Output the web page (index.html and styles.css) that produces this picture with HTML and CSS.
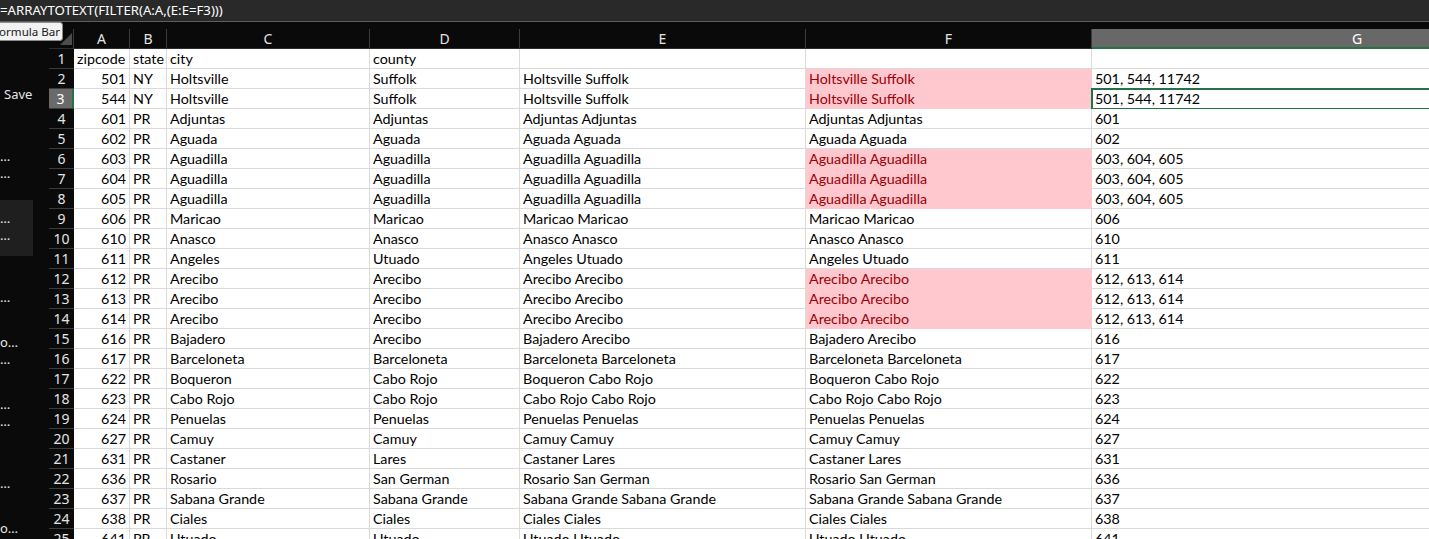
FILE: index.html
```html
<!DOCTYPE html>
<html lang="en">
<head>
    <meta charset="UTF-8">
    <title>Book1 - Excel</title>
    <link rel="stylesheet" href="styles.css">
</head>
<body>
    <div class="formula-bar">=ARRAYTOTEXT(FILTER(A:A,(E:E=F3)))</div>
    <div class="tip">Formula Bar</div>

    <div class="main">
        <!-- backstage list, cut off at the left -->
        <div class="sidebar">
            <div class="save">Save</div>
            <div class="recent"><span>…</span><span>…</span></div>
            <div class="recent active"><span>…</span><span>…</span></div>
            <div class="recent"><span></span><span>…</span></div>
            <div class="recent"><span>o…</span><span>…</span></div>
            <div class="recent"><span>…</span><span>…</span></div>
            <div class="recent"><span></span><span>…</span></div>
            <div class="recent"><span>o…</span><span></span></div>
        </div>

        <div class="sheet">
            <div class="row head">
                <div class="corner"><svg width="12" height="12" viewBox="0 0 12 12"><polygon points="12,0 12,12 0,12" fill="#4d4d4d"/></svg></div>
                <div class="col">A</div><div class="col">B</div><div class="col">C</div><div class="col">D</div><div class="col">E</div><div class="col">F</div><div class="col sel-col">G</div>
            </div>
            <div class="row"><div class="num">1</div><div class="c">zipcode</div><div class="c">state</div><div class="c">city</div><div class="c">county</div><div class="c"></div><div class="c"></div><div class="c"></div></div>
            <div class="row"><div class="num">2</div><div class="c n">501</div><div class="c">NY</div><div class="c">Holtsville</div><div class="c">Suffolk</div><div class="c">Holtsville Suffolk</div><div class="c dup">Holtsville Suffolk</div><div class="c">501, 544, 11742</div></div>
            <div class="row"><div class="num sel-row">3</div><div class="c n">544</div><div class="c">NY</div><div class="c">Holtsville</div><div class="c">Suffolk</div><div class="c">Holtsville Suffolk</div><div class="c dup">Holtsville Suffolk</div><div class="c active-cell">501, 544, 11742</div></div>
            <div class="row"><div class="num">4</div><div class="c n">601</div><div class="c">PR</div><div class="c">Adjuntas</div><div class="c">Adjuntas</div><div class="c">Adjuntas Adjuntas</div><div class="c">Adjuntas Adjuntas</div><div class="c">601</div></div>
            <div class="row"><div class="num">5</div><div class="c n">602</div><div class="c">PR</div><div class="c">Aguada</div><div class="c">Aguada</div><div class="c">Aguada Aguada</div><div class="c">Aguada Aguada</div><div class="c">602</div></div>
            <div class="row"><div class="num">6</div><div class="c n">603</div><div class="c">PR</div><div class="c">Aguadilla</div><div class="c">Aguadilla</div><div class="c">Aguadilla Aguadilla</div><div class="c dup">Aguadilla Aguadilla</div><div class="c">603, 604, 605</div></div>
            <div class="row"><div class="num">7</div><div class="c n">604</div><div class="c">PR</div><div class="c">Aguadilla</div><div class="c">Aguadilla</div><div class="c">Aguadilla Aguadilla</div><div class="c dup">Aguadilla Aguadilla</div><div class="c">603, 604, 605</div></div>
            <div class="row"><div class="num">8</div><div class="c n">605</div><div class="c">PR</div><div class="c">Aguadilla</div><div class="c">Aguadilla</div><div class="c">Aguadilla Aguadilla</div><div class="c dup">Aguadilla Aguadilla</div><div class="c">603, 604, 605</div></div>
            <div class="row"><div class="num">9</div><div class="c n">606</div><div class="c">PR</div><div class="c">Maricao</div><div class="c">Maricao</div><div class="c">Maricao Maricao</div><div class="c">Maricao Maricao</div><div class="c">606</div></div>
            <div class="row"><div class="num">10</div><div class="c n">610</div><div class="c">PR</div><div class="c">Anasco</div><div class="c">Anasco</div><div class="c">Anasco Anasco</div><div class="c">Anasco Anasco</div><div class="c">610</div></div>
            <div class="row"><div class="num">11</div><div class="c n">611</div><div class="c">PR</div><div class="c">Angeles</div><div class="c">Utuado</div><div class="c">Angeles Utuado</div><div class="c">Angeles Utuado</div><div class="c">611</div></div>
            <div class="row"><div class="num">12</div><div class="c n">612</div><div class="c">PR</div><div class="c">Arecibo</div><div class="c">Arecibo</div><div class="c">Arecibo Arecibo</div><div class="c dup">Arecibo Arecibo</div><div class="c">612, 613, 614</div></div>
            <div class="row"><div class="num">13</div><div class="c n">613</div><div class="c">PR</div><div class="c">Arecibo</div><div class="c">Arecibo</div><div class="c">Arecibo Arecibo</div><div class="c dup">Arecibo Arecibo</div><div class="c">612, 613, 614</div></div>
            <div class="row"><div class="num">14</div><div class="c n">614</div><div class="c">PR</div><div class="c">Arecibo</div><div class="c">Arecibo</div><div class="c">Arecibo Arecibo</div><div class="c dup">Arecibo Arecibo</div><div class="c">612, 613, 614</div></div>
            <div class="row"><div class="num">15</div><div class="c n">616</div><div class="c">PR</div><div class="c">Bajadero</div><div class="c">Arecibo</div><div class="c">Bajadero Arecibo</div><div class="c">Bajadero Arecibo</div><div class="c">616</div></div>
            <div class="row"><div class="num">16</div><div class="c n">617</div><div class="c">PR</div><div class="c">Barceloneta</div><div class="c">Barceloneta</div><div class="c">Barceloneta Barceloneta</div><div class="c">Barceloneta Barceloneta</div><div class="c">617</div></div>
            <div class="row"><div class="num">17</div><div class="c n">622</div><div class="c">PR</div><div class="c">Boqueron</div><div class="c">Cabo Rojo</div><div class="c">Boqueron Cabo Rojo</div><div class="c">Boqueron Cabo Rojo</div><div class="c">622</div></div>
            <div class="row"><div class="num">18</div><div class="c n">623</div><div class="c">PR</div><div class="c">Cabo Rojo</div><div class="c">Cabo Rojo</div><div class="c">Cabo Rojo Cabo Rojo</div><div class="c">Cabo Rojo Cabo Rojo</div><div class="c">623</div></div>
            <div class="row"><div class="num">19</div><div class="c n">624</div><div class="c">PR</div><div class="c">Penuelas</div><div class="c">Penuelas</div><div class="c">Penuelas Penuelas</div><div class="c">Penuelas Penuelas</div><div class="c">624</div></div>
            <div class="row"><div class="num">20</div><div class="c n">627</div><div class="c">PR</div><div class="c">Camuy</div><div class="c">Camuy</div><div class="c">Camuy Camuy</div><div class="c">Camuy Camuy</div><div class="c">627</div></div>
            <div class="row"><div class="num">21</div><div class="c n">631</div><div class="c">PR</div><div class="c">Castaner</div><div class="c">Lares</div><div class="c">Castaner Lares</div><div class="c">Castaner Lares</div><div class="c">631</div></div>
            <div class="row"><div class="num">22</div><div class="c n">636</div><div class="c">PR</div><div class="c">Rosario</div><div class="c">San German</div><div class="c">Rosario San German</div><div class="c">Rosario San German</div><div class="c">636</div></div>
            <div class="row"><div class="num">23</div><div class="c n">637</div><div class="c">PR</div><div class="c">Sabana Grande</div><div class="c">Sabana Grande</div><div class="c">Sabana Grande Sabana Grande</div><div class="c">Sabana Grande Sabana Grande</div><div class="c">637</div></div>
            <div class="row"><div class="num">24</div><div class="c n">638</div><div class="c">PR</div><div class="c">Ciales</div><div class="c">Ciales</div><div class="c">Ciales Ciales</div><div class="c">Ciales Ciales</div><div class="c">638</div></div>
            <div class="row"><div class="num">25</div><div class="c n">641</div><div class="c">PR</div><div class="c">Utuado</div><div class="c">Utuado</div><div class="c">Utuado Utuado</div><div class="c">Utuado Utuado</div><div class="c">641</div></div>
        </div>
    </div>
</body>
</html>
```

FILE: styles.css
```css
* {
    box-sizing: border-box;
}

body {
    margin: 0;
    background-color: #0a0a0a;
    font-family: "Noto Sans", "Open Sans", sans-serif;
    overflow: hidden;
    height: 539px;
    position: relative;
}

.formula-bar {
    height: 22px;
    background-color: #292929;
    border-bottom: 1px solid #5e5e5e;
    color: #ffffff;
    font-size: 13.2px;
    line-height: 20px;
    white-space: nowrap;
}

/* tooltip sitting over the grid corner */
.tip {
    position: absolute;
    left: -12px;
    top: 22px;
    height: 19px;
    padding: 0 2px 0 4px;
    background-color: #f2f2f2;
    border: 1px solid #8a8a8a;
    border-radius: 3px;
    color: #1a1a1a;
    font-size: 11.6px;
    line-height: 17px;
    white-space: nowrap;
}

.main {
    display: flex;
}

.sidebar {
    width: 49px;
    flex-shrink: 0;
    color: #e6e6e6;
    font-size: 13px;
    line-height: 17px;
    overflow: hidden;
}

.save {
    margin-top: 64px;
    padding-left: 4px;
    margin-bottom: 35px;
}

.recent {
    width: 33px;
    height: 56px;
    margin-bottom: 6px;
    padding-top: 10px;
    display: flex;
    flex-direction: column;
}

.recent span {
    height: 17px;
    white-space: nowrap;
}

.recent.active {
    background-color: #1f1f1f;
}

.sheet {
    flex: 1;
    min-width: 0;
    padding-top: 7px;
    overflow: hidden;
}

.row {
    display: grid;
    grid-template-columns: 25px 56px 37px 203px 150px 286px 286px 530px;
    height: 20px;
}

.head div {
    height: 20px;
    border-right: 1px solid #3b3b3b;
    border-bottom: 1px solid #2c2c2c;
    color: #e4e4e4;
    font-size: 14px;
    line-height: 19px;
    text-align: center;
}

.corner {
    display: flex;
    align-items: flex-end;
    justify-content: flex-end;
    padding: 0 1px 3px 0;
}

.corner svg {
    display: block;
}

.head .sel-col {
    background-color: #686868;
    border-bottom: 2px solid #217346;
    color: #ffffff;
    border-right: none;
}

.num {
    background-color: #0a0a0a;
    border-bottom: 1px solid #3b3b3b;
    color: #e4e4e4;
    font-size: 14px;
    line-height: 19px;
    text-align: center;
}

.num.sel-row {
    background-color: #6a6a6a;
    border-right: 2px solid #217346;
    color: #ffffff;
}

.c {
    background-color: #ffffff;
    border-right: 1px solid #dadada;
    border-bottom: 1px solid #dadada;
    padding: 0 3px;
    color: #000000;
    font-family: "Lato", "Liberation Sans", sans-serif;
    font-size: 14.3px;
    line-height: 19px;
    white-space: nowrap;
    overflow: hidden;
}

.c.n {
    text-align: right;
}

/* conditional format: duplicate values */
.c.dup {
    background-color: #ffc7ce;
    border-color: #ffc7ce;
    color: #9c0006;
}

.c.active-cell {
    outline: 2px solid #217346;
    outline-offset: -1px;
}
```
